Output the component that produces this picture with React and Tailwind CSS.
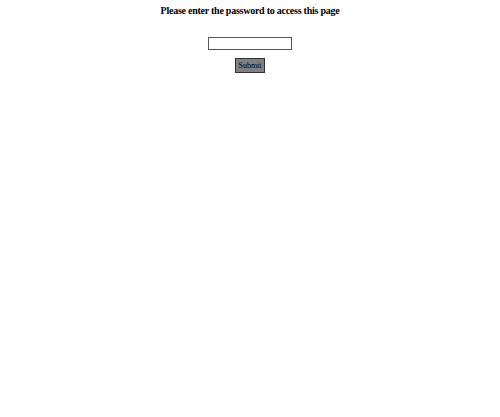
export default function App() {
  return (
    <div className="w-[500px] h-[417px] bg-white flex flex-col items-center" style={{ fontFamily: '"Liberation Serif", serif' }}>
      <h1 className="mt-[5px] text-[10px] leading-[12px] font-bold text-black tracking-[-0.25px]">
        Please enter the password to access this page
      </h1>
      <input type="password" className="mt-[20px] w-[84px] h-[13px] border border-[#555] bg-white" />
      <button className="mt-[8px] w-[30px] h-[15px] bg-[#808080] border border-[#333] text-[8px] leading-[12px] text-black">
        Submit
      </button>
    </div>
  );
}
